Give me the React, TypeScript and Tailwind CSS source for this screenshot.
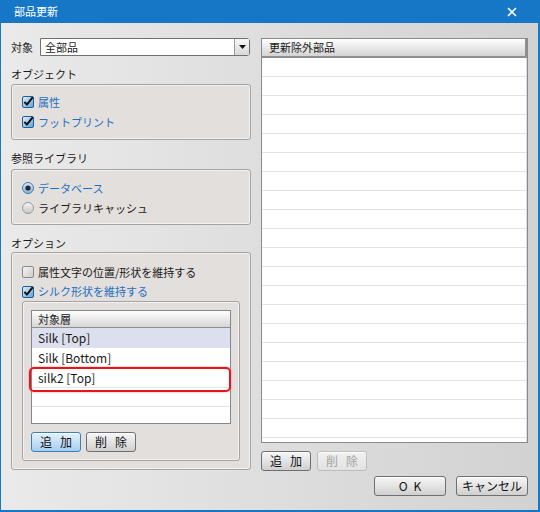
import type { ReactNode } from 'react'

const FONT = "font-['Noto_Sans_CJK_JP','Noto_Sans',sans-serif]"

function CheckBox({ checked }: { checked: boolean }) {
  return (
    <svg width="12" height="12" viewBox="0 0 12 12" className="shrink-0">
      <defs>
        <linearGradient id={checked ? 'cbOn' : 'cbOff'} x1="0" y1="0" x2="1" y2="1">
          <stop offset="0" stopColor={checked ? '#e6f2fc' : '#f7f7f7'} />
          <stop offset="1" stopColor={checked ? '#5b9fd9' : '#c9c9c9'} />
        </linearGradient>
      </defs>
      <rect x="0.5" y="0.5" width="11" height="11" rx="1.5" fill={`url(#${checked ? 'cbOn' : 'cbOff'})`} stroke={checked ? '#1f5f99' : '#8a8a8a'} />
      {checked ? <path d="M2.4 5.8 L4.9 8.6 L10.8 1.2" fill="none" stroke="#111" strokeWidth="2" strokeLinejoin="round" /> : null}
    </svg>
  )
}

function Radio({ checked }: { checked: boolean }) {
  return (
    <svg width="12" height="12" viewBox="0 0 12 12" className="shrink-0">
      <defs>
        <linearGradient id={checked ? 'rdOn' : 'rdOff'} x1="0" y1="0" x2="0" y2="1">
          <stop offset="0" stopColor={checked ? '#d6e6f3' : '#f6f6f6'} />
          <stop offset="1" stopColor={checked ? '#8fb4d6' : '#c6c6c6'} />
        </linearGradient>
      </defs>
      <circle cx="6" cy="6" r="5.5" fill={`url(#${checked ? 'rdOn' : 'rdOff'})`} stroke={checked ? '#3f7fb8' : '#9a9a9a'} />
      {checked ? <circle cx="6" cy="6" r="2.6" fill="#1c2a38" /> : null}
    </svg>
  )
}

function GroupBox({ className, children }: { className: string; children: ReactNode }) {
  return <div className={`rounded-[3px] border border-[#a3a3a3] bg-[#e3dfdd] shadow-[inset_0_0_0_1px_#f4f2f1] ${className}`}>{children}</div>
}

function Button({ label, width, gap = 'gap-0', variant = 'normal' }: { label: string[]; width: string; gap?: string; variant?: 'normal' | 'focus' | 'disabled' }) {
  const styles = {
    normal: 'border-[#6f6f6f] bg-gradient-to-b from-[#f6f6f6] via-[#e4e4e4] to-[#cfcfcf] text-[#111]',
    focus: 'border-[#3c7fb1] bg-gradient-to-b from-[#e4f1fb] via-[#c4e0f6] to-[#a6cdee] text-[#111]',
    disabled: 'border-[#bdbdbd] bg-gradient-to-b from-[#f1f1f1] to-[#e2e2e2] text-[#a3a3a3]'
  }[variant]
  return (
    <div className={`flex h-[20px] items-center justify-center rounded-[3px] border text-[12px] leading-none shadow-[inset_0_1px_0_#ffffff] ${gap} ${styles} ${width}`}>
      {label.map((part) => <span key={part}>{part}</span>)}
    </div>
  )
}

export default function App() {
  const rightRows = Array.from({ length: 21 })
  return (
    <div className={`flex h-[512px] w-[540px] flex-col overflow-hidden ${FONT} text-[11px] text-[#1a1a1a]`}>
      <div className="flex h-[23px] shrink-0 items-center justify-between bg-[#1777c7] pl-[14px] pr-[23px] text-white">
        <span className="text-[11px] leading-none">部品更新</span>
        <svg width="10" height="10" viewBox="0 0 10 10">
          <path d="M1 1 L9 9 M9 1 L1 9" stroke="#fff" strokeWidth="1.6" />
        </svg>
      </div>

      <div className="flex flex-1 border-b-2 border-l border-r-2 border-[#1777c7] bg-gradient-to-r from-[#eaeaea] to-[#d2d2d2] pt-[15px]">
        {/* left column */}
        <div className="ml-[10px] flex w-[240px] flex-col">
          <div className="flex h-[18px] items-center">
            <span className="w-[29px] leading-none">対象</span>
            <div className="flex h-[18px] w-[210px] items-stretch rounded-r-[3px] border border-[#707070] bg-white">
              <span className="flex-1 pl-[4px] leading-[16px]">全部品</span>
              <div className="flex w-[15px] items-center justify-center border-l border-[#9a9a9a] bg-gradient-to-b from-[#f6f6f6] to-[#d9d9d9]">
                <svg width="7" height="4" viewBox="0 0 7 4"><path d="M0 0 H7 L3.5 4 Z" fill="#111" /></svg>
              </div>
            </div>
          </div>

          <div className="mt-[9px] flex h-[18px] items-center leading-none">オブジェクト</div>
          <GroupBox className="mt-px h-[56px] pl-[10px] pt-[7px]">
            <div className="flex h-[20px] items-center gap-[4px] text-[#1f6fbf]"><CheckBox checked /><span className="leading-none">属性</span></div>
            <div className="flex h-[20px] items-center gap-[4px] text-[#1f6fbf]"><CheckBox checked /><span className="leading-none">フットプリント</span></div>
          </GroupBox>

          <div className="mt-[9px] flex h-[18px] items-center leading-none">参照ライブラリ</div>
          <GroupBox className="mt-[2px] h-[56px] pl-[10px] pt-[8px]">
            <div className="flex h-[20px] items-center gap-[4px] text-[#1f6fbf]"><Radio checked /><span className="leading-none">データベース</span></div>
            <div className="flex h-[20px] items-center gap-[4px]"><Radio checked={false} /><span className="leading-none">ライブラリキャッシュ</span></div>
          </GroupBox>

          <div className="mt-[9px] flex h-[18px] items-center leading-none">オプション</div>
          <GroupBox className="h-[218px] pt-[9px]">
            <div className="ml-[10px] flex h-[20px] items-center gap-[4px]"><CheckBox checked={false} /><span className="leading-none">属性文字の位置/形状を維持する</span></div>
            <div className="ml-[10px] flex h-[19px] items-center gap-[4px] text-[#1f6fbf]"><CheckBox checked /><span className="leading-none">シルク形状を維持する</span></div>
            <GroupBox className="ml-[10px] h-[160px] w-[218px] pl-[8px] pt-[8px]">
              <div className="relative h-[114px] w-[200px] border border-[#828790] bg-white">
                <div className="flex h-[17px] items-center border-b border-[#8e8e8e] bg-gradient-to-b from-[#ffffff] to-[#d6d6d6] pl-[6px] leading-none">対象層</div>
                <div className="flex h-[20px] items-center bg-[#dcdfed] pl-[6px] text-[12px] leading-none">Silk [Top]</div>
                <div className="flex h-[20px] items-center border-b border-[#e4e4e4] pl-[6px] text-[12px] leading-none">Silk [Bottom]</div>
                <div className="flex h-[20px] items-center border-b border-[#e4e4e4] pl-[6px] text-[12px] leading-none">silk2 [Top]</div>
                <div className="h-[19px] border-b border-[#e4e4e4]" />
                <div className="absolute left-[-3px] top-[56px] h-[25px] w-[202px] rounded-[5px] border-2 border-[#e8141b] shadow-[0_0_2px_#ff8080]" />
              </div>
              <div className="mt-[8px] flex gap-[5px]">
                <Button label={['追', '加']} gap="gap-[8px]" width="w-[50px]" variant="focus" />
                <Button label={['削', '除']} gap="gap-[8px]" width="w-[50px]" />
              </div>
            </GroupBox>
          </GroupBox>
        </div>

        {/* right column */}
        <div className="ml-[10px] flex w-[267px] flex-col">
          <div className="flex h-[405px] flex-col overflow-hidden border border-[#8a8a8a] bg-white">
            <div className="flex h-[19px] shrink-0 items-center border-b-2 border-r-2 border-[#8f8f8f] bg-gradient-to-b from-[#ffffff] to-[#d4d4d4] pl-[7px] leading-none">更新除外部品</div>
            {rightRows.map((_, i) => (
              <div key={i} className="h-[19px] shrink-0 border-b border-r border-b-[#e2e2e2] border-r-[#dadce8]" />
            ))}
          </div>
          <div className="mt-[8px] flex gap-[6px]">
            <Button label={['追', '加']} gap="gap-[8px]" width="w-[50px]" />
            <Button label={['削', '除']} gap="gap-[8px]" width="w-[50px]" variant="disabled" />
          </div>
          <div className="mt-[5px] flex justify-end gap-[10px]">
            <Button label={['O', 'K']} gap="gap-[6px]" width="w-[72px]" />
            <Button label={['キャンセル']} width="w-[72px]" />
          </div>
        </div>
      </div>
    </div>
  )
}
